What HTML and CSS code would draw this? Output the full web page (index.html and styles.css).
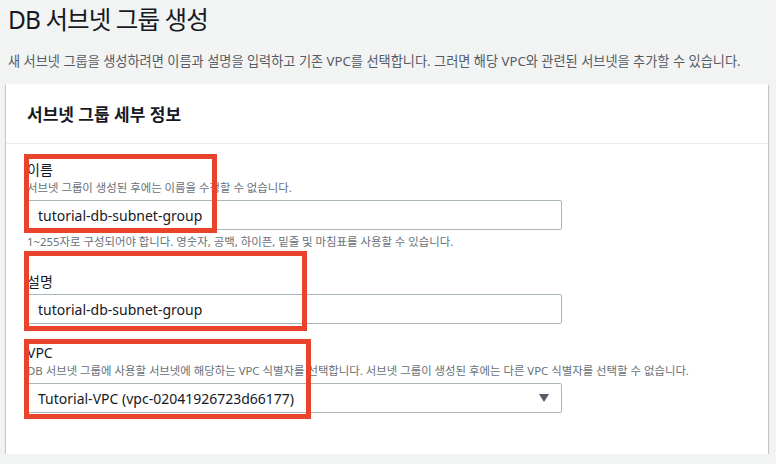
FILE: index.html
```html
<!DOCTYPE html>
<html lang="ko">
<head>
<meta charset="utf-8">
<title>DB 서브넷 그룹 생성</title>
<link rel="stylesheet" href="styles.css">
</head>
<body>
<div class="page">
  <h1 class="title">DB 서브넷 그룹 생성</h1>
  <p class="intro">새 서브넷 그룹을 생성하려면 이름과 설명을 입력하고 기존 VPC를 선택합니다. 그러면 해당 VPC와 관련된 서브넷을 추가할 수 있습니다.</p>
  <section class="card">
    <div class="card-header"><h2>서브넷 그룹 세부 정보</h2></div>
    <div class="card-body">
      <div class="field f1">
        <div class="label">이름</div>
        <div class="desc">서브넷 그룹이 생성된 후에는 이름을 수정할 수 없습니다.</div>
        <div class="input">tutorial-db-subnet-group</div>
        <div class="help">1~255자로 구성되어야 합니다. 영숫자, 공백, 하이픈, 밑줄 및 마침표를 사용할 수 있습니다.</div>
        <div class="mark m1"></div>
      </div>
      <div class="field f2">
        <div class="label">설명</div>
        <div class="input">tutorial-db-subnet-group</div>
        <div class="mark m2"></div>
      </div>
      <div class="field f3">
        <div class="label">VPC</div>
        <div class="desc">DB 서브넷 그룹에 사용할 서브넷에 해당하는 VPC 식별자를 선택합니다. 서브넷 그룹이 생성된 후에는 다른 VPC 식별자를 선택할 수 없습니다.</div>
        <div class="input select"><span>Tutorial-VPC (vpc-02041926723d66177)</span><span class="caret"></span></div>
        <div class="mark m3"></div>
      </div>
    </div>
  </section>
</div>
</body>
</html>
```
FILE: styles.css
```css
html, body {
  margin: 0;
  padding: 0;
  background: #f2f3f3;
  font-family: "Noto Sans", "Noto Sans CJK KR", sans-serif;
  color: #16191f;
}
.page {
  padding: 0 8px 0 6px;
}
.title {
  margin: 0;
  padding: 2px 0 0 2px;
  font-size: 24.5px;
  line-height: 36px;
  font-weight: 400;
  letter-spacing: -0.9px;
}
.intro {
  margin: 13px 0 0 2px;
  font-size: 13.2px;
  line-height: 20px;
  color: #545b64;
}
.card {
  margin-top: 13px;
  width: 762px;
  background: #fff;
  box-shadow: 0 1px 1px 0 rgba(0, 28, 36, 0.3), 1px 1px 1px 0 rgba(0, 28, 36, 0.15), -1px 1px 1px 0 rgba(0, 28, 36, 0.15);
}
.card-header {
  height: 59px;
  display: flex;
  align-items: center;
  padding: 0 21px;
  border-bottom: 1px solid #eaeded;
}
.card-header h2 {
  margin: 0;
  font-size: 17px;
  font-weight: 700;
}
.card-body {
  padding: 16px 21px 41px;
}
.field {
  position: relative;
}
.f2 { margin-top: 22px; }
.f3 { margin-top: 19px; }
.label {
  font-size: 14px;
  line-height: 20px;
}
.desc, .help {
  font-size: 11.4px;
  line-height: 16px;
  color: #687078;
}
.input {
  margin-top: 4px;
  width: 513px;
  height: 28px;
  border: 1px solid #aab7b8;
  border-radius: 2px;
  padding: 0 10px;
  box-sizing: content-box;
  display: flex;
  align-items: center;
  font-size: 14px;
  color: #16191f;
}
.f2 .input { margin-top: 2px; }
.help { margin-top: 4px; }
.select {
  justify-content: space-between;
  width: 511px;
  padding-right: 12px;
}
.caret {
  width: 0;
  height: 0;
  border-left: 5.5px solid transparent;
  border-right: 5.5px solid transparent;
  border-top: 8px solid #545b64;
}
.mark {
  position: absolute;
  border: 5px solid #e9432b;
  box-sizing: border-box;
}
.m1 { left: -3px; top: -6px; width: 193px; height: 79px; }
.m2 { left: -3px; top: -21px; width: 283px; height: 80px; }
.m3 { left: -3px; top: -4px; width: 287px; height: 80px; }
```
